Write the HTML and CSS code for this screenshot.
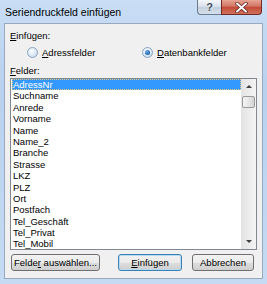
FILE: index.html
```html
<!DOCTYPE html>
<html lang="de">

<head>
    <meta charset="UTF-8">
    <meta name="viewport" content="width=device-width, initial-scale=1.0">
    <title>Seriendruckfeld einfügen</title>
    <link rel="stylesheet" href="styles.css">
</head>

<body>
    <div class="window">
        <div class="titlebar">
            <span class="caption">Seriendruckfeld einfügen</span>
            <div class="caption-buttons">
                <span class="cap-btn help">?</span>
                <span class="cap-btn close">
                    <svg width="13" height="11" viewBox="0 0 13 11">
                        <path d="M2 1.5 L11 9.5 M11 1.5 L2 9.5" stroke="#5a2020" stroke-width="3.4" stroke-linecap="round" />
                        <path d="M2 1.5 L11 9.5 M11 1.5 L2 9.5" stroke="#fff" stroke-width="2" stroke-linecap="round" />
                    </svg>
                </span>
            </div>
        </div>

        <!-- client area -->
        <div class="client">
            <div class="label"><u>E</u>infügen:</div>
            <div class="radio-row">
                <label class="radio"><span class="dot"></span><span><u>A</u>dressfelder</span></label>
                <label class="radio checked"><span class="dot"></span><span><u>D</u>atenbankfelder</span></label>
            </div>

            <div class="label felder"><u>F</u>elder:</div>
            <div class="listbox">
                <ul class="items">
                    <li class="selected">AdressNr</li>
                    <li>Suchname</li>
                    <li>Anrede</li>
                    <li>Vorname</li>
                    <li>Name</li>
                    <li>Name_2</li>
                    <li>Branche</li>
                    <li>Strasse</li>
                    <li>LKZ</li>
                    <li>PLZ</li>
                    <li>Ort</li>
                    <li>Postfach</li>
                    <li>Tel_Geschäft</li>
                    <li>Tel_Privat</li>
                    <li>Tel_Mobil</li>
                </ul>
                <div class="scrollbar">
                    <span class="arrow up"></span>
                    <span class="thumb"></span>
                    <span class="track"></span>
                    <span class="arrow down"></span>
                </div>
            </div>

            <div class="buttons">
                <button class="btn wide">Felde<u>r</u> auswählen...</button>
                <button class="btn default"><u>E</u>infügen</button>
                <button class="btn">Abbrechen</button>
            </div>
        </div>
    </div>
</body>

</html>
```

FILE: styles.css
```css
html,
body {
    margin: 0;
    height: 100%;
}

body {
    font-family: "Liberation Sans", Arial, sans-serif;
    font-size: 9.5px;
    color: #000;
}

.window {
    width: 267px;
    height: 284px;
    box-sizing: border-box;
    background: linear-gradient(#c9def5, #b9d1ee 30%, #c6dbf3);
    display: flex;
    flex-direction: column;
}

.titlebar {
    height: 23px;
    display: flex;
    align-items: flex-start;
    padding-left: 5px;
}

.caption {
    font-size: 10.5px;
    margin-top: 6px;
    color: #000;
}

.caption-buttons {
    margin-left: auto;
    margin-right: 5px;
    display: flex;
}

.cap-btn {
    height: 15px;
    display: flex;
    align-items: center;
    justify-content: center;
    box-sizing: border-box;
    border: 1px solid #6b7a8f;
    border-top: none;
}

.help {
    width: 24px;
    border-radius: 0 0 0 4px;
    background: linear-gradient(#f4f7fb, #d6dfea 50%, #c3cfdd 51%, #d5e0ec);
    color: #444c58;
    font-size: 11px;
    font-weight: bold;
    text-shadow: 0 0 2px #fff;
    border-right: none;
}

.close {
    width: 41px;
    border-radius: 0 0 4px 0;
    border-color: #6f2a26;
    background: linear-gradient(#e8a493, #d27664 45%, #c24a37 50%, #d0725b);
}

.client {
    flex: 1;
    margin: 0 4px 5px 4px;
    border: 1px solid #98a8bd;
    background: #f0f0f0;
    padding: 6px 5px 0 5px;
    display: flex;
    flex-direction: column;
}

.label {
    line-height: 12px;
}

.radio-row {
    display: flex;
    margin-top: 4px;
    padding-left: 17px;
    height: 12px;
    align-items: center;
}

.radio {
    display: flex;
    align-items: center;
    gap: 4px;
    width: 127px;
}

.dot {
    width: 9px;
    height: 9px;
    border-radius: 50%;
    border: 1px solid #8aa4c0;
    background: radial-gradient(circle at 40% 35%, #ffffff, #d7e6f5 60%, #b8d0ea);
    position: relative;
}

.checked .dot::after {
    content: "";
    position: absolute;
    left: 2px;
    top: 2px;
    width: 5px;
    height: 5px;
    border-radius: 50%;
    background: radial-gradient(circle at 40% 35%, #6fb2ef, #1a5ea8 70%, #0f3f80);
}

.felder {
    margin-top: 7px;
}

.listbox {
    margin-top: 1px;
    height: 172px;
    box-sizing: border-box;
    border: 1px solid #828790;
    background: #fff;
    display: flex;
}

.items {
    flex: 1;
    list-style: none;
    margin: 0;
    padding: 0 0 0 1px;
    overflow: hidden;
}

.items li {
    line-height: 11.4px;
    height: 11.4px;
    padding-left: 1px;
    white-space: nowrap;
}

.items .selected {
    background: #3399ff;
    color: #fff;
    outline: 1px dotted #f0c47a;
    outline-offset: -1px;
}

.scrollbar {
    width: 15px;
    display: flex;
    flex-direction: column;
    align-items: center;
    background: linear-gradient(90deg, #e3e3e3, #f4f4f4);
}

.arrow {
    width: 15px;
    height: 15px;
    position: relative;
}

.arrow::after {
    content: "";
    position: absolute;
    left: 5px;
    width: 0;
    height: 0;
    border-left: 3px solid transparent;
    border-right: 3px solid transparent;
}

.up::after {
    top: 6px;
    border-bottom: 3px solid #404040;
}

.down::after {
    top: 6px;
    border-top: 3px solid #404040;
}

.thumb {
    width: 13px;
    height: 12px;
    margin-top: 2px;
    box-sizing: border-box;
    border: 1px solid #9a9a9a;
    border-radius: 2px;
    background: linear-gradient(90deg, #f4f4f4, #e6e6e6 50%, #d4d4d4);
}

.track {
    flex: 1;
}

.buttons {
    display: flex;
    margin-top: 4px;
    padding-left: 1px;
}

.btn {
    font-family: inherit;
    font-size: 9.5px;
    height: 17px;
    padding: 0;
    border: 1px solid #707070;
    border-radius: 3px;
    background: linear-gradient(#f2f2f2, #ebebeb 50%, #dddddd 51%, #cfcfcf);
    color: #000;
    width: 62px;
}

.btn.wide {
    width: 89px;
}

.btn.default {
    margin-left: 18px;
    margin-right: 10px;
    width: 64px;
    border-color: #3c7fb1;
    box-shadow: inset 0 0 0 1px #b5dcf4;
}
```
